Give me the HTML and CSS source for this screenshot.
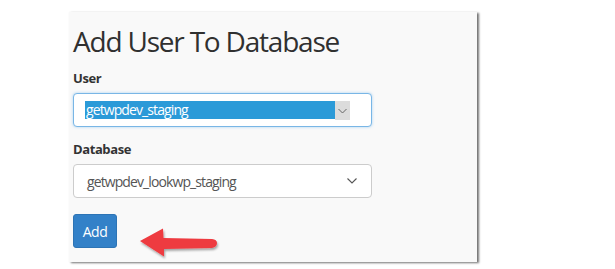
FILE: index.html
```html
<!DOCTYPE html>
<html>
<head>
<meta charset="utf-8">
<link rel="stylesheet" href="styles.css">
</head>
<body>
<div class="page">
  <div class="panel">
    <h1 class="title">Add User To Database</h1>
    <div class="field">
      <div class="label">User</div>
      <div class="select select-focus">
        <span class="selected">getwpdev_staging</span>
        <span class="arrow-box">
          <svg width="15" height="19" viewBox="0 0 15 19"><path d="M3.5 8 L7.5 12 L11.5 8" fill="none" stroke="#666" stroke-width="1"/></svg>
        </span>
      </div>
    </div>
    <div class="field">
      <div class="label">Database</div>
      <div class="select">
        <span class="value">getwpdev_lookwp_staging</span>
        <svg class="chevron" width="12" height="8" viewBox="0 0 12 8"><path d="M1.5 1.5 L6 6 L10.5 1.5" fill="none" stroke="#555" stroke-width="1.1"/></svg>
      </div>
    </div>
    <div class="actions">
      <button class="btn">Add</button>
      <svg class="annot" width="84" height="34" viewBox="0 0 84 34">
        <defs>
          <filter id="sh" x="-20%" y="-30%" width="140%" height="170%">
            <feDropShadow dx="1" dy="2" stdDeviation="1.2" flood-color="#000" flood-opacity="0.35"/>
          </filter>
        </defs>
        <path filter="url(#sh)" fill="#ee3a40" d="M2 14 L25 1.5 L25.5 11 L74 12 Q79 12.5 79 16 Q79 20 74 21 L26 22 L26 29.5 Z"/>
      </svg>
    </div>
  </div>
  <p class="cut">In fact, this lets the staging database talk to the live site.</p>
</div>
</body>
</html>
```

FILE: styles.css
```css
html, body {
  margin: 0;
  padding: 0;
  background: #ffffff;
}
.page {
  width: 615px;
  height: 269px;
  overflow: hidden;
  font-family: "Open Sans", "Liberation Sans", sans-serif;
  color: #333;
}
.panel {
  margin: 12px 0 0 69px;
  width: 404px;
  height: 237px;
  padding: 13px 0 0 4px;
  background: #f9f9f9;
  box-shadow: 2px 1px 2px rgba(0,0,0,0.55), 0 0 1px rgba(0,0,0,0.06);
}
.title {
  margin: 0;
  font-size: 28px;
  line-height: 33px;
  font-weight: 400;
  letter-spacing: -1.2px;
  color: #303030;
}
.field {
  margin-top: 10px;
}
.field + .field {
  margin-top: 12px;
}
.label {
  font-size: 13px;
  line-height: 20px;
  font-weight: 700;
  letter-spacing: -0.4px;
  color: #333;
}
.select {
  margin-top: 5px;
  width: 286px;
  height: 32px;
  border: 1px solid #cccccc;
  border-radius: 4px;
  background: #fff;
  display: flex;
  align-items: center;
  padding: 0 0 0 11px;
  box-sizing: content-box;
}
.select-focus {
  border-color: #79b6e6;
  box-shadow: 0 0 3px rgba(102,175,233,0.55);
}
.selected {
  display: block;
  width: 250px;
  height: 18px;
  line-height: 18px;
  background: #2b9ad8;
  color: #fff;
  font-size: 14px;
  letter-spacing: -0.9px;
  padding-left: 1px;
  box-sizing: border-box;
}
.arrow-box {
  display: flex;
  width: 15px;
  height: 19px;
  background: #dcdcdc;
}
.value {
  flex: 1;
  font-size: 14px;
  letter-spacing: -0.9px;
  color: #555;
  padding-left: 2px;
}
.chevron {
  margin-right: 13px;
}
.actions {
  margin-top: 16px;
  position: relative;
  height: 34px;
}
.btn {
  width: 44px;
  height: 34px;
  border: 1px solid #2d74b5;
  border-radius: 3px;
  background: #3381c8;
  color: #fff;
  font-family: "Open Sans", "Liberation Sans", sans-serif;
  font-size: 14px;
  letter-spacing: -0.5px;
  padding: 0;
}
.annot {
  position: absolute;
  left: 65px;
  top: 13px;
}
.cut {
  margin: 4px 0 0 79px;
  font-size: 14px;
  line-height: 20px;
  color: #555;
}
```
